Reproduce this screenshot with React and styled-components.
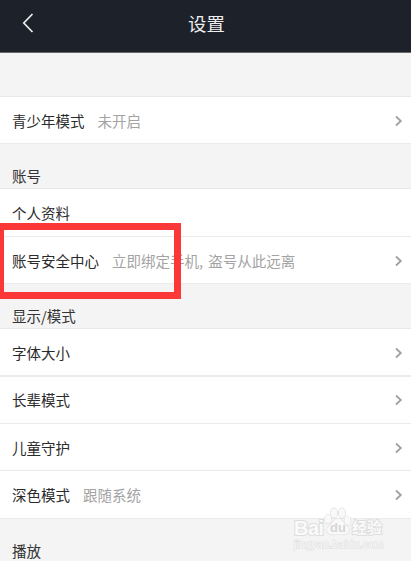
import React from 'react';
import styled, { createGlobalStyle } from 'styled-components';

const GlobalStyle = createGlobalStyle`
  body {
    margin: 0;
    background: #f4f4f4;
    font-family: "Noto Sans CJK SC", sans-serif;
  }
`

const Page = styled.div`
  position: relative;
  height: 561px;
  overflow: hidden;
  background: #f4f4f4;
`

const Header = styled.header`
  display: grid;
  grid-template-columns: 56px 1fr 54px;
  align-items: center;
  height: 53px;
  padding-bottom: 6px;
  box-sizing: border-box;
  border-bottom: 1px solid #66686d;
  background: #1d2129;
  color: #eeeeef;

  h1 {
    margin: 0;
    font-size: 18.4px;
    font-weight: 400;
    line-height: 24px;
    text-align: center;
  }
`

const BackButton = styled.button`
  display: flex;
  height: 24px;
  padding: 0 0 0 22px;
  border: 0;
  background: none;
  color: inherit;
`

const SectionTitle = styled.h2`
  display: flex;
  align-items: flex-end;
  height: ${({ $height }) => $height || 45}px;
  margin: 0;
  padding: 0 12px 1px;
  box-sizing: border-box;
  border-bottom: 1px solid #e9e9e9;
  color: #333;
  font-size: 14.5px;
  font-weight: 400;
  line-height: 22px;
`

const Row = styled.div`
  display: flex;
  align-items: center;
  height: ${({ $height }) => $height || 47}px;
  padding: ${({ $top = 2 }) => $top}px 8px 0 12px;
  box-sizing: border-box;
  border-bottom: ${({ $line }) => $line || 1}px solid #ebebec;
  background: #fff;
  color: #2b2b2b;
  font-size: 14.5px;
  line-height: 22px;
  white-space: nowrap;

  svg {
    margin-left: auto;
  }
`

const Hint = styled.span`
  margin-left: 13px;
  color: #a3a3a3;
  word-spacing: 2px;
`

const Highlight = styled.div`
  position: absolute;
  left: 0;
  top: 223px;
  width: 181px;
  height: 76px;
  box-sizing: border-box;
  border: 7px solid #fc3737;
  border-left-width: 4px;
`

const Watermark = styled.div`
  position: absolute;
  left: 294px;
  top: 507px;
  width: 92px;
  color: #fafafa;
  font-family: "Liberation Sans", "Noto Sans CJK SC", sans-serif;
  white-space: nowrap;
`

const Brand = styled.div`
  display: flex;
  align-items: flex-start;
  height: 30px;
  font-weight: 700;
  line-height: 20px;
  -webkit-text-stroke: 2px #dedede;
  paint-order: stroke fill;

  .latin {
    width: 30px;
    padding-top: 11px;
    font-size: 20px;
    letter-spacing: -0.5px;
  }

  .cjk {
    padding-top: 11px;
    font-size: 15px;
    line-height: 20px;
  }

  svg {
    flex: none;
  }
`

const Address = styled.div`
  font-size: 11px;
  line-height: 14px;
  letter-spacing: 0.05px;
  -webkit-text-stroke: 1.2px #dedede;
  paint-order: stroke fill;
`

const Chevron = () => (
  <svg width="9" height="12" viewBox="0 0 9 12" fill="none" stroke="#a0a0a0" strokeWidth="1.8">
    <path d="M2 1.500 6.800 6 2 10.500" />
  </svg>
)

const Paw = () => (
  <svg width="28" height="29" viewBox="0 0 28 29" fill="#f9f9f9" stroke="#dcdcdc" strokeWidth="1.2">
    <ellipse cx="10" cy="6" rx="3.4" ry="4.8" />
    <ellipse cx="18" cy="6" rx="3.4" ry="4.8" />
    <ellipse cx="4" cy="12" rx="3.1" ry="4.4" />
    <ellipse cx="23.500" cy="13.500" rx="3.1" ry="4.4" />
    <path d="M14 11.500c-4 0-5 4-7.500 6.200C4 20 2 21.500 3.200 24.500c1.200 3 4 3.300 7 3h7.600c3 .3 5.800 0 7-3 1.200-3-.8-4.500-3.300-6.800C19 15.500 18 11.500 14 11.500Z" />
    <DuText x="14" y="25">du</DuText>
  </svg>
)

const DuText = styled.text`
  fill: #d6d6d6;
  stroke: none;
  font-size: 13px;
  font-weight: 700;
  text-anchor: middle;
  -webkit-text-stroke: 0;
`

const App = () => {
  const displayItems = [
    { name: '字体大小', height: 48, line: 2 },
    { name: '长辈模式', height: 47, top: 0 },
    { name: '儿童守护', height: 47 },
    { name: '深色模式', hint: '跟随系统', height: 48, top: 0 },
  ]

  return (
    <Page>
      <GlobalStyle />
      <Header>
        <BackButton aria-label="返回">
          <svg width="12" height="24" viewBox="0 0 12 24" fill="none" stroke="currentColor" strokeWidth="1.7">
            <path d="M10.500 3 1.800 12 10.500 21" />
          </svg>
        </BackButton>
        <h1>设置</h1>
      </Header>

      <SectionTitle as="div" $height={44} />
      <Row>
        青少年模式
        <Hint>未开启</Hint>
        <Chevron />
      </Row>

      <SectionTitle>账号</SectionTitle>
      <Row $height={48} $top={0}>个人资料</Row>
      <Row>
        账号安全中心
        <Hint>立即绑定手机, 盗号从此远离</Hint>
        <Chevron />
      </Row>

      <SectionTitle>显示/模式</SectionTitle>
      {displayItems.map((item) => (
        <Row key={item.name} $height={item.height} $line={item.line} $top={item.top}>
          {item.name}
          {item.hint && <Hint>{item.hint}</Hint>}
          <Chevron />
        </Row>
      ))}

      <SectionTitle>播放</SectionTitle>

      <Highlight />
      <Watermark>
        <Brand>
          <span className="latin">Bai</span>
          <Paw />
          <span className="cjk">经验</span>
        </Brand>
        <Address>jingyan.baidu.com</Address>
      </Watermark>
    </Page>
  )
};

export default App;
